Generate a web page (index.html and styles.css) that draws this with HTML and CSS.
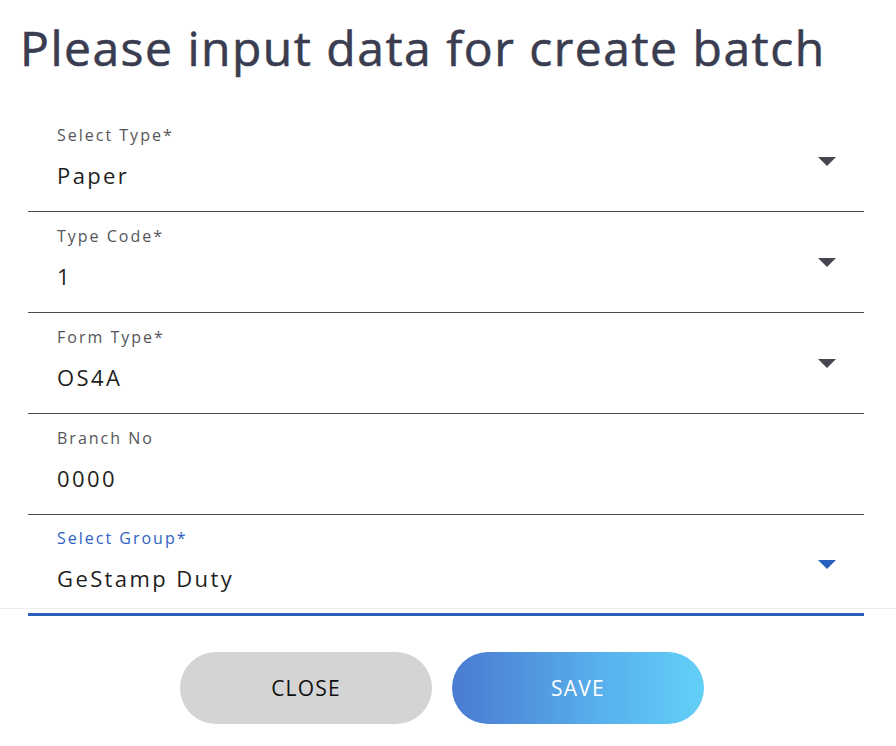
FILE: index.html
```html
<!DOCTYPE html>
<html lang="en">
<head>
<meta charset="utf-8">
<title>Create batch</title>
<link rel="stylesheet" href="styles.css">
</head>
<body>
<div class="dialog">
  <div class="content">
    <h1 class="title">Please input data for create batch</h1>
    <div class="fields">
      <div class="field">
        <div class="field-text">
          <div class="label">Select Type*</div>
          <div class="value">Paper</div>
        </div>
        <svg class="arrow" width="18" height="9" viewBox="0 0 18 9"><path d="M0 0H18L9 9Z"/></svg>
      </div>
      <div class="field">
        <div class="field-text">
          <div class="label">Type Code*</div>
          <div class="value">1</div>
        </div>
        <svg class="arrow" width="18" height="9" viewBox="0 0 18 9"><path d="M0 0H18L9 9Z"/></svg>
      </div>
      <div class="field">
        <div class="field-text">
          <div class="label">Form Type*</div>
          <div class="value">OS4A</div>
        </div>
        <svg class="arrow" width="18" height="9" viewBox="0 0 18 9"><path d="M0 0H18L9 9Z"/></svg>
      </div>
      <div class="field">
        <div class="field-text">
          <div class="label">Branch No</div>
          <div class="value">0000</div>
        </div>
      </div>
      <div class="field focused">
        <div class="field-text">
          <div class="label">Select Group*</div>
          <div class="value">GeStamp Duty</div>
        </div>
        <svg class="arrow" width="18" height="9" viewBox="0 0 18 9"><path d="M0 0H18L9 9Z"/></svg>
      </div>
    </div>
  </div>
  <div class="actions">
    <button class="btn btn-close">CLOSE</button>
    <button class="btn btn-save">SAVE</button>
  </div>
</div>
</body>
</html>
```

FILE: styles.css
```css
html, body {
  margin: 0;
  padding: 0;
  background: #ffffff;
}

body {
  font-family: "Open Sans", "Noto Sans", "Liberation Sans", sans-serif;
  width: 896px;
  height: 746px;
  overflow: hidden;
}

.dialog {
  display: flex;
  flex-direction: column;
  height: 746px;
  background: #ffffff;
}

.content {
  height: 609px;
  flex-shrink: 0;
  box-sizing: border-box;
  border-bottom: 1px solid #ececf1;
  display: flex;
  flex-direction: column;
}

.title {
  flex-shrink: 0;
  margin: 0;
  padding: 17px 20px 0 20px;
  height: 111px;
  box-sizing: border-box;
  font-size: 48px;
  line-height: 62px;
  font-weight: 500;
  color: #3a3c50;
  letter-spacing: 1.5px;
  white-space: nowrap;
  -webkit-text-stroke: 0.6px #3a3c50;
}

.fields {
  flex-shrink: 0;
  display: flex;
  flex-direction: column;
  margin: 0 32px 0 28px;
}

.field {
  flex-shrink: 0;
  height: 101px;
  box-sizing: border-box;
  border-bottom: 1px solid #4a4a4f;
  padding: 0 28px 0 29px;
  display: flex;
  align-items: center;
  justify-content: space-between;
}

.field.focused {
  border-bottom: 3px solid #2a5fbe;
  height: 101px;
}

.field-text {
  display: flex;
  flex-direction: column;
  padding: 0 0 10px 0;
}

.label {
  font-size: 16px;
  line-height: 20px;
  color: #555559;
  letter-spacing: 2px;
}

.field.focused .label {
  color: #2e62c3;
}

.value {
  margin-top: 17px;
  font-size: 22px;
  line-height: 26px;
  color: #1f1f22;
  letter-spacing: 2.4px;
}

.arrow {
  fill: #45464f;
  display: block;
}

.field.focused .arrow {
  fill: #2a5fbe;
}

.actions {
  display: flex;
  justify-content: center;
  gap: 20px;
  padding: 43px 12px 0 0;
}

.btn {
  width: 252px;
  height: 72px;
  border: none;
  border-radius: 36px;
  font-family: "Open Sans", "Noto Sans", "Liberation Sans", sans-serif;
  font-size: 21px;
  letter-spacing: 1.2px;
  padding: 0;
}

.btn-close {
  background: #d4d4d4;
  color: #111111;
}

.btn-save {
  background: linear-gradient(90deg, #4a7bd1 0%, #58b1ec 60%, #62d0f9 100%);
  color: #ffffff;
}
```
